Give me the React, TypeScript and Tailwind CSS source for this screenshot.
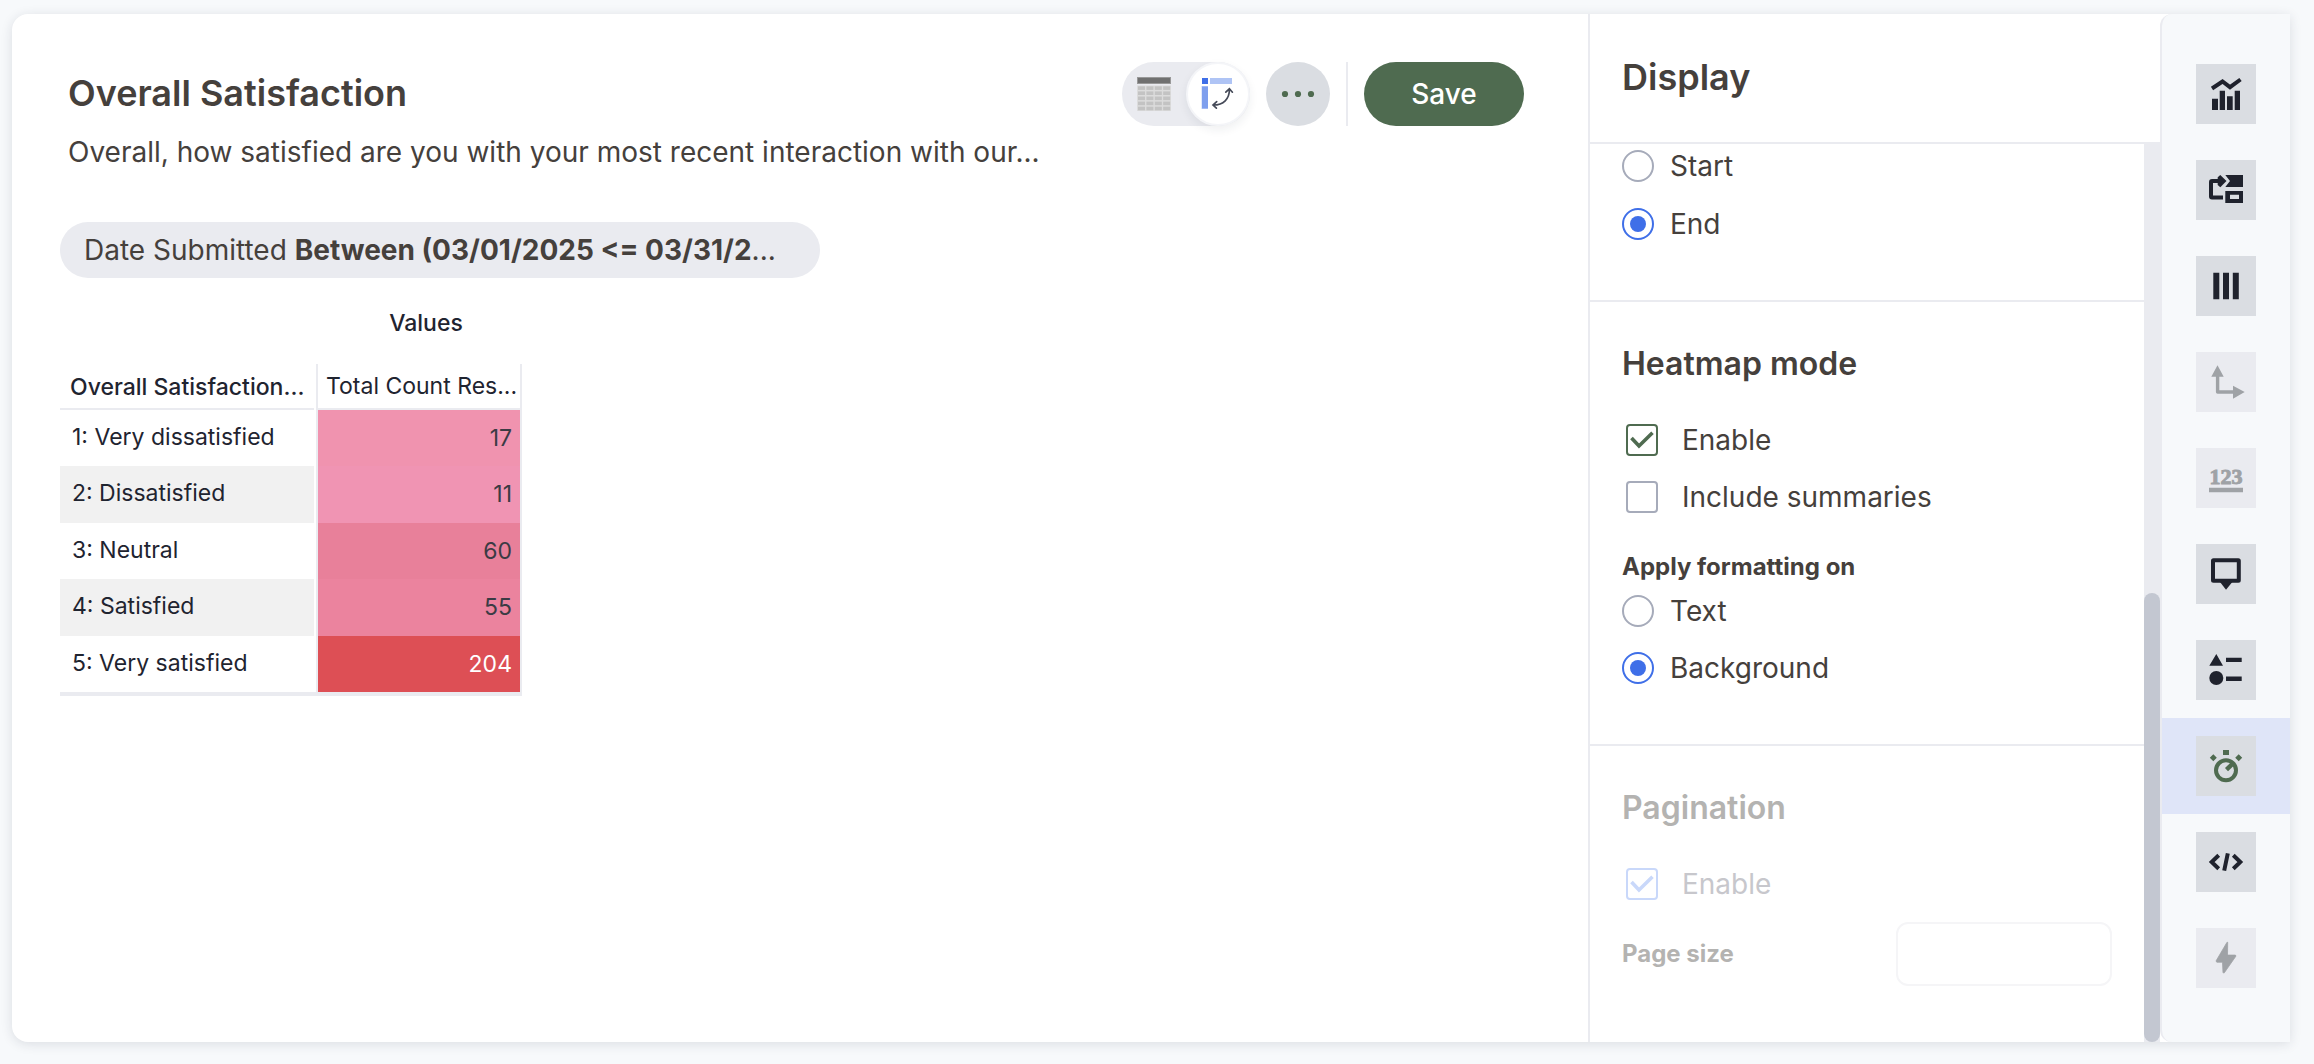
import React, { useState } from 'react';
import clsx from 'clsx';

const rows = [
  { label: '1: Very dissatisfied', value: 17, cell: 'bg-[#f093af] text-[#3b3b44]' },
  { label: '2: Dissatisfied', value: 11, cell: 'bg-[#f094b3] text-[#3b3b44]' },
  { label: '3: Neutral', value: 60, cell: 'bg-[#e8809a] text-[#3b3b44]' },
  { label: '4: Satisfied', value: 55, cell: 'bg-[#eb839e] text-[#3b3b44]' },
  { label: '5: Very satisfied', value: 204, cell: 'bg-[#dd4f55] text-white' },
];

const tools = [
  {
    name: 'Chart type',
    icon: (
      <>
        <path d="M16 24.5 26.5 17.5 34 23.2 44.5 15.5" fill="none" stroke="currentColor" strokeWidth="4" />
        <path d="M16 34.7h6V46h-6zM23.7 26.7H29V46h-5.3zM31 32.3h5.7V46H31zM38.7 26.7H44V46h-5.3z" />
      </>
    ),
  },
  {
    name: 'Data binding',
    icon: (
      <>
        <path d="M27 37.5H16a1 1 0 0 1-1-1V22a1 1 0 0 1 1-1h9" fill="none" stroke="currentColor" strokeWidth="4" />
        <path d="M21.7 17.3 24.3 15l6.2 6-6.2 6.3-2.6-2.3z" />
        <path d="M29.3 15H47v12H29.3l4.7-6z" />
        <path d="M29.3 31H47v12H29.3zM34 34.7V39h9v-4.3z" fillRule="evenodd" />
      </>
    ),
  },
  {
    name: 'Columns',
    icon: <path d="M17.3 16.7h6v26.6h-6zM27 16.7h6v26.6h-6zM36.8 16.7h6v26.6h-6z" />,
  },
  {
    name: 'Axes',
    disabled: true,
    icon: (
      <>
        <path d="M21.6 24v16H38" fill="none" stroke="currentColor" strokeWidth="3.4" strokeLinejoin="round" />
        <path d="M15.3 24.7 21.5 13.3l6.2 11.4zM37 33.7 48.7 40 37 46.7z" />
      </>
    ),
  },
  {
    name: 'Number format',
    disabled: true,
    icon: (
      <>
        <text
          x="30"
          y="36"
          textAnchor="middle"
          className="font-['Liberation_Serif',serif] text-[22px] font-bold"
          stroke="currentColor"
          strokeWidth="1"
        >
          123
        </text>
        <path d="M13 39.7h34v4.6H13z" />
      </>
    ),
  },
  {
    name: 'Tooltip',
    icon: (
      <>
        <rect x="17" y="16.3" width="25.8" height="20.4" rx="0.5" fill="none" stroke="currentColor" strokeWidth="4" />
        <path d="M24 38h12.3L30 45.7z" />
      </>
    ),
  },
  {
    name: 'Legend',
    icon: (
      <>
        <path d="M13.3 25.7 20.3 14 27 25.7zM30 17.7h15.7V22H30zM30 36.6h15.7V41H30z" />
        <circle cx="20.3" cy="38" r="7" />
      </>
    ),
  },
  {
    name: 'Display',
    active: true,
    icon: (
      <>
        <circle cx="30" cy="34.3" r="10" fill="none" stroke="currentColor" strokeWidth="4" />
        <path d="M30.5 33.6 36.5 27.8" stroke="currentColor" strokeWidth="4.4" />
        <path d="M27 14h6v5h-6zM17.3 18.2l3.5 3.5-3.5 3.5-3.5-3.5zM42.7 18.2l3.5 3.5-3.5 3.5-3.5-3.5z" />
      </>
    ),
  },
  {
    name: 'Custom CSS',
    icon: (
      <path
        d="M22.7 23.3 15.7 30l7 6.7M37.3 23.3l7 6.7-7 6.7M31.8 21.3 28.2 38.7"
        fill="none"
        stroke="currentColor"
        strokeWidth="4"
      />
    ),
  },
  {
    name: 'Actions',
    disabled: true,
    icon: (
      <path
        d="M31 14.3 20 33l.8 1.2h5.7L27 44.8h1.3L40 28l-.6-.9h-7.9l.2-12.8z"
        stroke="currentColor"
        strokeWidth="0.8"
        strokeLinejoin="round"
      />
    ),
  },
];

function TableIcon() {
  return (
    <svg viewBox="0 0 34 34" className="h-[34px] w-[34px]">
      <path d="M0 0h34v7H0z" fill="#999" />
      <path d="M1 1h32v5H1z" fill="#707070" />
      <path d="M0 8.5h34V34H0z" fill="#dcdcdc" />
      {[9.3, 14.4, 19.5, 24.6, 29.7].map((y) =>
        [1, 9.4, 17.8, 26.2].map((x) => (
          <rect key={`${x}-${y}`} x={x} y={y} width="7" height="3.6" fill="#c3c3c3" />
        ))
      )}
    </svg>
  );
}

function PivotIcon() {
  return (
    <svg viewBox="0 0 64 64" className="h-16 w-16 shrink-0">
      <path d="M16 16h6v6h-6z" fill="#3f6fe8" />
      <path d="M24 16h22v6H24z" fill="#afc4f5" />
      <path d="M15.5 24H22v23h-6.5z" fill="#c5d4f8" />
      <path d="M16 24.5h6v22h-6z" fill="#7e9fee" />
      <path
        d="M43.4 27.5C43.4 37 37.5 43 27.5 43M39.8 30.2l3.6-3.4 3 3.4M30.7 39.6 27 43l3.4 3.2"
        fill="none"
        stroke="#454a58"
        strokeWidth="1.7"
        strokeLinecap="round"
      />
    </svg>
  );
}

function Checkbox({ label, checked, onChange, disabled = false }: {
  label: string;
  checked: boolean;
  onChange?: (v: boolean) => void;
  disabled?: boolean;
}) {
  return (
    <label className="flex h-8 items-center gap-6 pl-1">
      <span className="grid h-8 w-8">
        <input
          type="checkbox"
          checked={checked}
          disabled={disabled}
          onChange={(e) => onChange?.(e.target.checked)}
          className="col-start-1 row-start-1 h-8 w-8 appearance-none rounded-sm border-2 border-[#a6abba] bg-white checked:border-[#4f6b50] disabled:border-[#c9d8fa]"
        />
        {checked && (
          <svg
            viewBox="0 0 32 32"
            className={clsx('pointer-events-none col-start-1 row-start-1 h-8 w-8', disabled ? 'text-[#c9d8fa]' : 'text-[#4f6b50]')}
          >
            <path d="M5.5 14 13 22 26.5 8.7" fill="none" stroke="currentColor" strokeWidth="3.6" />
          </svg>
        )}
      </span>
      <span className={clsx('text-[28px]', disabled && 'text-[#c7c7cc]')}>{label}</span>
    </label>
  );
}

function Radio({ name, label, checked, onChange }: {
  name: string;
  label: string;
  checked: boolean;
  onChange: () => void;
}) {
  return (
    <label className="flex h-8 items-center gap-4">
      <input
        type="radio"
        name={name}
        checked={checked}
        onChange={onChange}
        className="grid h-8 w-8 appearance-none place-items-center rounded-full border-2 border-[#a6abba] bg-white before:h-4 before:w-4 before:rounded-full checked:border-[#3f6fe8] checked:before:bg-[#3f6fe8]"
      />
      <span className="text-[28px]">{label}</span>
    </label>
  );
}

export default function App() {
  const [view, setView] = useState('pivot');
  const [position, setPosition] = useState('End');
  const [heatmap, setHeatmap] = useState(true);
  const [summaries, setSummaries] = useState(false);
  const [formatOn, setFormatOn] = useState('Background');

  return (
    <div className="flex min-h-screen bg-[#f7f9fb] pt-3.5 pr-6 pb-[22px] pl-3 font-[Inter,sans-serif] text-[#45403c]">
      <div className="flex flex-1 rounded-l-2xl rounded-r-sm bg-white shadow-[0_2px_12px_rgba(30,40,60,0.13)]">
        <main className="min-w-0 flex-1 pt-12 pr-16 pl-12">
          <div className="flex items-start justify-between">
            <div className="min-w-0 pl-2">
              <h1 className="text-[36px] leading-[62px] font-semibold">Overall Satisfaction</h1>
              <p className="truncate text-[28px] leading-14">
                Overall, how satisfied are you with your most recent interaction with our...
              </p>
            </div>
            <div className="flex shrink-0 items-center gap-4">
              <div className="flex items-center rounded-full bg-[#eaebf0]">
                <button
                  aria-label="Table view"
                  aria-pressed={view === 'table'}
                  onClick={() => setView('table')}
                  className="flex h-16 w-16 items-center justify-center"
                >
                  <TableIcon />
                </button>
                <button
                  aria-label="Pivot view"
                  aria-pressed={view === 'pivot'}
                  onClick={() => setView('pivot')}
                  className="flex h-16 w-16 items-center justify-center rounded-full border-2 border-[#f4f5f8] bg-white shadow-[0_4px_10px_rgba(30,40,60,0.07)]"
                >
                  <PivotIcon />
                </button>
              </div>
              <button aria-label="More options" className="h-16 w-16 rounded-full bg-[#dadde2] text-[#4f6b50]">
                <svg viewBox="0 0 64 64" className="h-16 w-16" fill="currentColor">
                  <circle cx="19" cy="32" r="3.1" />
                  <circle cx="32" cy="32" r="3.1" />
                  <circle cx="45" cy="32" r="3.1" />
                </svg>
              </button>
              <div className="h-16 w-0.5 bg-[#eaebf0]" />
              <button className="h-16 w-40 rounded-full bg-[#4f6b50] text-[28px] font-medium text-white">Save</button>
            </div>
          </div>

          <div className="mt-[42px] h-14 w-[760px] truncate rounded-full bg-[#eaebf0] px-6 text-[28px] leading-14">
            Date Submitted <b className="font-bold">Between (03/01/2025 &lt;= 03/31/2</b>...
          </div>

          <table className="mt-4 w-[462px] table-fixed border-separate border-spacing-0 text-[23px] text-[#1f2430]">
            <colgroup>
              <col className="w-[256px]" />
              <col className="w-[206px]" />
            </colgroup>
            <thead>
              <tr className="h-[70px]">
                <td></td>
                <th className="pb-3 pl-3.5 text-center font-medium">Values</th>
              </tr>
              <tr className="h-[46px]">
                <th className="p-0 text-left font-medium whitespace-nowrap">
                  <div className="mr-0.5 h-[46px] border-b-2 border-[#eaebf0] pl-2.5 leading-[46px]">Overall Satisfaction...</div>
                </th>
                <th className="border-x-2 border-b-2 border-[#eaebf0] p-0 pl-2 text-left font-normal whitespace-nowrap">
                  Total Count Res...
                </th>
              </tr>
            </thead>
            <tbody>
              {rows.map((row) => (
                <tr key={row.label} className="group h-14 even:h-[57px]">
                  <td className="p-0">
                    <div className="mr-0.5 h-14 pl-3 leading-[54px] group-even:h-[57px] group-even:bg-[#f1f1f1]">{row.label}</div>
                  </td>
                  <td className={clsx('border-x-2 border-[#eaebf0] p-0 pr-2 text-right', row.cell)}>{row.value}</td>
                </tr>
              ))}
              <tr className="h-1">
                <td colSpan={2} className="bg-[#eaebf0] p-0"></td>
              </tr>
            </tbody>
          </table>
        </main>

        <aside className="flex w-[572px] shrink-0 flex-col border-l-2 border-[#eaebf0]">
          <header className="h-[130px] border-b-2 border-[#eaebf0] px-8">
            <h2 className="text-[36px] leading-[126px] font-semibold">Display</h2>
          </header>
          <div className="flex flex-1">
            <div className="flex-1">
              <section className="flex flex-col gap-[26px] border-b-2 border-[#eaebf0] px-8 pt-1.5 pb-15">
                {['Start', 'End'].map((v) => (
                  <Radio key={v} name="position" label={v} checked={position === v} onChange={() => setPosition(v)} />
                ))}
              </section>

              <section className="border-b-2 border-[#eaebf0] px-8 pt-8 pb-15">
                <h3 className="text-[32px] leading-[60px] font-semibold">Heatmap mode</h3>
                <div className="mt-[30px] flex flex-col gap-[25px]">
                  <Checkbox label="Enable" checked={heatmap} onChange={setHeatmap} />
                  <Checkbox label="Include summaries" checked={summaries} onChange={setSummaries} />
                </div>
                <h4 className="mt-9 mb-2.5 text-[24px] leading-9 font-bold">Apply formatting on</h4>
                <div className="flex flex-col gap-[25px]">
                  {['Text', 'Background'].map((v) => (
                    <Radio key={v} name="format" label={v} checked={formatOn === v} onChange={() => setFormatOn(v)} />
                  ))}
                </div>
              </section>

              <section className="px-8 pt-8 text-[#b4b3b1]">
                <h3 className="text-[32px] leading-[60px] font-semibold">Pagination</h3>
                <div className="mt-[30px]">
                  <Checkbox label="Enable" checked disabled />
                </div>
                <div className="mt-[22px] flex items-center justify-between">
                  <label htmlFor="page-size" className="text-[24px] font-bold">Page size</label>
                  <input
                    id="page-size"
                    type="text"
                    disabled
                    className="h-16 w-[216px] rounded-xl border-2 border-[#f5f5f7] bg-white px-4 text-[24px]"
                  />
                </div>
              </section>
            </div>
            <div className="flex w-4 flex-col justify-end bg-[#eaebf0]">
              <div className="h-1/2 rounded-full bg-[#c3c7d1]" />
            </div>
          </div>
        </aside>

        <nav className="w-[130px] shrink-0 rounded-l-xl border-l-2 border-[#eaebf0] bg-[#f7f9fb] pt-8">
          {tools.map((tool) => (
            <div key={tool.name} className={clsx('flex h-24 items-center justify-center', tool.active && 'bg-[#dfe5f8]')}>
              <button
                aria-label={tool.name}
                disabled={tool.disabled}
                className={clsx(
                  'h-15 w-15',
                  tool.disabled ? 'bg-[#eaebf0] text-[#9fa2a6]' : 'bg-[#dadde2]',
                  !tool.disabled && (tool.active ? 'text-[#4f6b50]' : 'text-[#1f222d]')
                )}
              >
                <svg viewBox="0 0 60 60" className="h-15 w-15" fill="currentColor">
                  {tool.icon}
                </svg>
              </button>
            </div>
          ))}
        </nav>
      </div>
    </div>
  );
}
